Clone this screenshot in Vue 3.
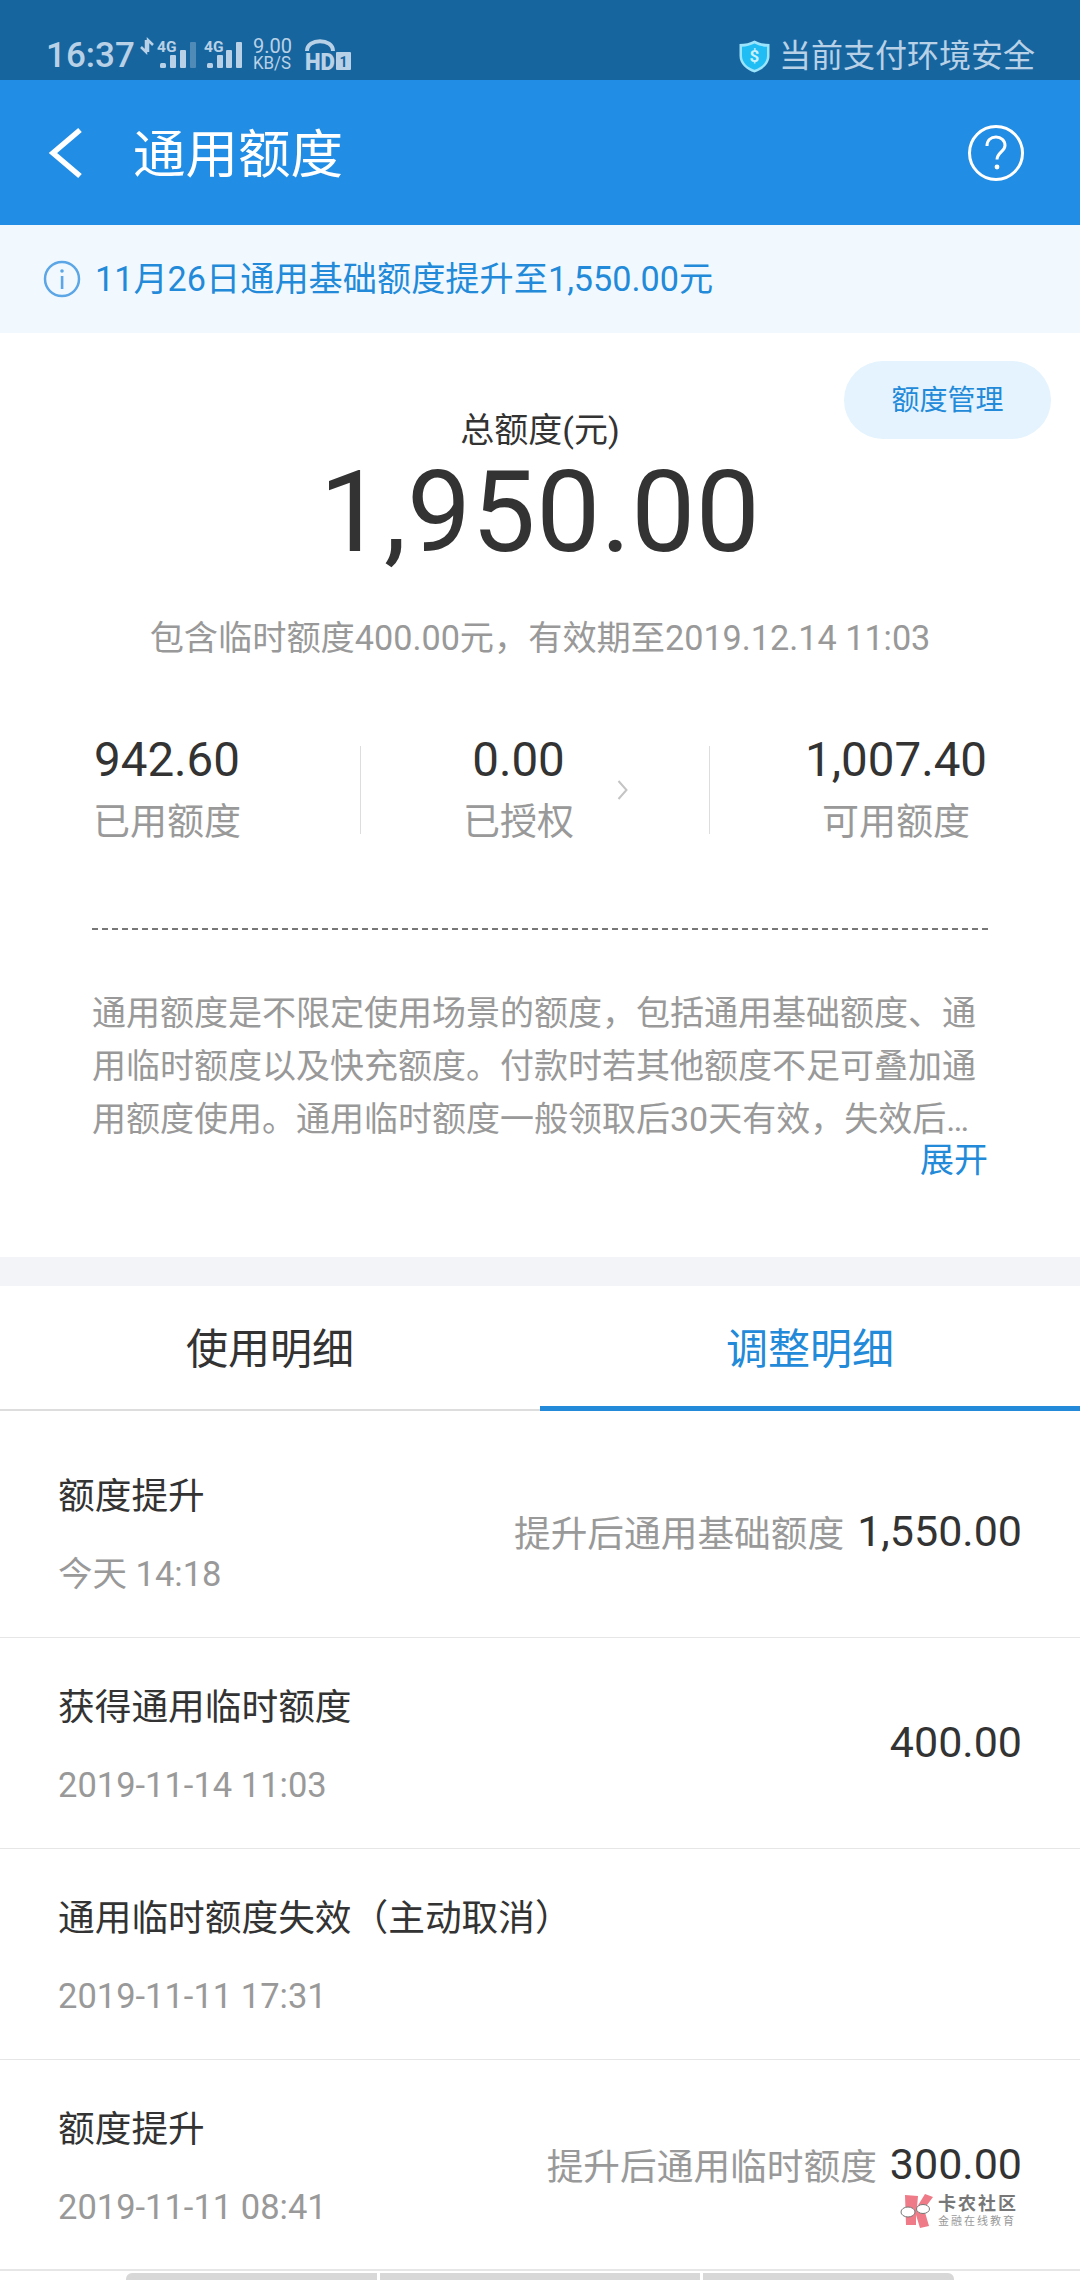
<script setup>
import { ref } from 'vue';

const activeTab = ref(1);
const tabs = ['使用明细', '调整明细'];

const stats = [
  { value: '942.60', label: '已用额度', cls: 'used' },
  { value: '0.00', label: '已授权', cls: 'auth' },
  { value: '1,007.40', label: '可用额度', cls: 'free' }
];

const records = [
  { title: '额度提升', time: '今天 14:18', note: '提升后通用基础额度', amount: '1,550.00' },
  { title: '获得通用临时额度', time: '2019-11-14 11:03', note: '', amount: '400.00' },
  { title: '通用临时额度失效（主动取消）', time: '2019-11-11 17:31', note: '', amount: '' },
  { title: '额度提升', time: '2019-11-11 08:41', note: '提升后通用临时额度', amount: '300.00' }
];
</script>

<template>
  <div class="page" lang="zh-CN">
    <div class="status">
      <span class="clock">16:37</span>
      <svg class="sys" width="220" height="44" viewBox="0 -8 220 44" fill="#b9d1e6">
        <path d="M10 2v12L5 9 M12 14V2l5 5" stroke="#b9d1e6" stroke-width="2.500" fill="none" />
        <text x="21" y="14" font-size="15.500" font-weight="700" font-family="Roboto">4G</text>
        <rect x="24" y="25" width="6" height="5" rx="1.500" />
        <rect x="34" y="17" width="6" height="13" rx="1" />
        <rect x="44" y="12" width="6" height="18" rx="1" />
        <rect x="54" y="4" width="6" height="26" rx="1" opacity="0.35" />
        <text x="68" y="14" font-size="15.500" font-weight="700" font-family="Roboto">4G</text>
        <rect x="71" y="25" width="6" height="5" rx="1.500" />
        <rect x="81" y="17" width="6" height="13" rx="1" />
        <rect x="90" y="12" width="6" height="18" rx="1" />
        <rect x="100" y="4" width="6" height="26" rx="1" />
        <text x="117" y="15" font-size="20" font-family="Roboto">9.00</text>
        <text x="117" y="31" font-size="18" font-family="Roboto" textLength="38" lengthAdjust="spacingAndGlyphs">KB/S</text>
        <path d="M171 13c0-13 26-13 26 0" stroke="#b9d1e6" stroke-width="4" fill="none" />
        <text x="169" y="32" font-size="24" font-weight="900" font-family="Roboto" textLength="30" lengthAdjust="spacingAndGlyphs">HD</text>
        <rect x="200" y="14" width="15" height="18" rx="1" />
        <text x="203.500" y="29" font-size="14" font-weight="700" font-family="Roboto" fill="#17659f">1</text>
      </svg>
      <span class="safe">
        <svg width="31" height="33" viewBox="0 0 31 33">
          <path d="M15.500 0.500C20 3 25 4 30.500 4v12c0 8-7 14-15 16.500C7.500 30 0.500 24 0.500 16V4C6 4 11 3 15.500 0.500z" fill="#9be4fb" />
          <path d="M15.500 3.500C19.500 5.500 23.500 6.500 28 6.800V16c0 6.500-5.500 11.500-12.500 13.800C8.500 27.500 3 22.500 3 16V6.800C7.500 6.500 11.500 5.500 15.500 3.500z" fill="#1fbdf3" />
          <text x="15.500" y="22" text-anchor="middle" font-size="17" font-weight="700" font-family="Roboto" fill="#c9f1fd">$</text>
        </svg>
        当前支付环境安全
      </span>
    </div>

    <header class="bar">
      <svg class="back" width="36" height="52" viewBox="0 0 36 52">
        <path d="M32 3L5 26l27 23" fill="none" stroke="#fff" stroke-width="5.500" />
      </svg>
      <h1 class="title">通用额度</h1>
      <svg class="help" width="58" height="58" viewBox="0 0 58 58">
        <circle cx="29" cy="29" r="26.500" fill="none" stroke="#fff" stroke-width="3" />
        <path d="M20 22c0-6 4-9 9-9s9 3.500 9 8.500c0 6-8 7-8 14" fill="none" stroke="#fff" stroke-width="3" />
        <circle cx="30" cy="43" r="2.400" fill="#fff" />
      </svg>
    </header>

    <div class="notice">
      <svg width="38" height="38" viewBox="0 0 38 38">
        <circle cx="19" cy="19" r="17" fill="none" stroke="#5ca6e6" stroke-width="2.500" />
        <rect x="17.800" y="16" width="2.600" height="13" fill="#5ca6e6" />
        <circle cx="19" cy="11" r="1.800" fill="#5ca6e6" />
      </svg>
      <span class="notice-text">11月26日通用基础额度提升至1,550.00元</span>
    </div>

    <section class="summary">
      <button class="manage">额度管理</button>
      <div class="total-label">总额度(元)</div>
      <div class="total">1,950.00</div>
      <div class="temp">包含临时额度400.00元，有效期至2019.12.14 11:03</div>

      <div class="stats">
        <div v-for="s in stats" :key="s.cls" class="stat" :class="s.cls">
          <div class="stat-value">{{ s.value }}</div>
          <div class="stat-label">{{ s.label }}</div>
          <svg v-if="s.cls === 'auth'" class="chevron" width="11" height="20" viewBox="0 0 11 20">
            <path d="M1.500 1l8 9-8 9" fill="none" stroke="#c4c4c4" stroke-width="2" />
          </svg>
        </div>
      </div>

      <div class="desc">
        <p>通用额度是不限定使用场景的额度，包括通用基础额度、通用临时额度以及快充额度。付款时若其他额度不足可叠加通用额度使用。通用临时额度一般领取后30天有效，失效后…</p>
        <div class="more">展开</div>
      </div>
    </section>

    <nav class="tabs">
      <div v-for="(t, i) in tabs" :key="t" class="tab" :class="{ on: activeTab === i }" @click="activeTab = i">{{ t }}</div>
    </nav>

    <ul class="list">
      <li v-for="r in records" :key="r.time" class="row">
        <div class="row-left">
          <div class="row-title">{{ r.title }}</div>
          <div class="row-time">{{ r.time }}</div>
        </div>
        <div v-if="r.amount" class="row-right">
          <span v-if="r.note" class="row-note">{{ r.note }}</span>
          <span class="row-amount">{{ r.amount }}</span>
        </div>
      </li>
    </ul>

    <div class="mark">
      <svg width="34" height="35" viewBox="0 0 34 35">
        <path d="M5 2l13 1-1 11 8-13 8 3-9 12 5 17-9 2-4-13v10H6z" fill="#ee7b87" />
        <ellipse cx="8" cy="19" rx="7" ry="5" fill="#fff" stroke="#777" stroke-width="1" />
        <ellipse cx="23" cy="16" rx="6.500" ry="4.500" fill="#fff" stroke="#777" stroke-width="1" />
      </svg>
      <div>
        <div class="mark-name">卡农社区</div>
        <div class="mark-sub">金融在线教育</div>
      </div>
    </div>

    <div class="dock">
      <span></span><span></span><span></span>
    </div>
  </div>
</template>

<style scoped>
.page {
  position: relative;
  width: 1080px;
  height: 2280px;
  overflow: hidden;
  background: #fff;
  font-family: Roboto, "Noto Sans CJK SC", sans-serif;
  color: #333;
}

.status {
  height: 80px;
  box-sizing: border-box;
  padding: 35px 45px 0 46px;
  background: #17659f;
  color: #b9d1e6;
  display: flex;
  align-items: flex-start;
}
.clock {
  font-size: 35px;
  line-height: 42px;
  font-weight: 500;
  width: 90px;
}
.sys {
  margin: -5px 0 0 0;
}
.safe {
  margin-left: auto;
  display: flex;
  align-items: center;
  gap: 9px;
  font-size: 32px;
  line-height: 42px;
}

.bar {
  height: 145px;
  background: #228de4;
  display: flex;
  align-items: center;
  padding: 0 55px 0 48px;
}
.title {
  margin: 0 0 6px 49px;
  font-size: 52.5px;
  font-weight: 400;
  color: #fff;
}
.help {
  margin-left: auto;
}

.notice {
  height: 108px;
  background: #f1f9ff;
  display: flex;
  align-items: center;
  gap: 14px;
  padding-left: 43px;
  font-size: 34.2px;
  color: #228ad8;
}
.notice-text {
  margin-bottom: 6px;
}

.summary {
  position: relative;
  height: 924px;
  box-sizing: border-box;
  padding-top: 74px;
  text-align: center;
}
.manage {
  position: absolute;
  top: 28px;
  right: 29px;
  width: 207px;
  height: 78px;
  padding: 0 0 5px;
  border: 0;
  border-radius: 39px;
  background: #e4f3fd;
  color: #228ad8;
  font: 28px Roboto, "Noto Sans CJK SC", sans-serif;
}
.total-label {
  font-size: 34px;
  line-height: 46px;
}
.total {
  font-size: 114px;
  line-height: 118px;
  letter-spacing: 0.5px;
}
.temp {
  margin-top: 44px;
  font-size: 34.2px;
  line-height: 46px;
  color: #999;
}

.stats {
  display: flex;
  margin-top: 85px;
  padding-left: 93px;
}
.stat {
  position: relative;
  height: 88px;
  display: flex;
  flex-direction: column;
  align-items: center;
}
.stat-value {
  font-size: 47.5px;
  line-height: 54px;
  margin-top: -13px;
}
.stat-label {
  font-size: 37px;
  line-height: 50px;
  margin-top: 11px;
  color: #999;
}
.used {
  padding-right: 119px;
  border-right: 1px solid #ddd;
}
.auth {
  padding: 0 135px 0 102px;
  border-right: 1px solid #ddd;
}
.free {
  padding-left: 95px;
}
.chevron {
  position: absolute;
  right: 81px;
  top: 34px;
}

.desc {
  margin: 94px 92px 0;
  padding-top: 57px;
  border-top: 2px dashed #777;
  font-size: 34px;
  line-height: 53px;
  color: #999;
  text-align: left;
}
.desc p {
  margin: 0;
}
.more {
  margin-top: -8px;
  text-align: right;
  color: #228ad8;
  line-height: 44px;
}

.tabs {
  display: flex;
  height: 125px;
  border-top: 29px solid #f3f4f8;
  box-sizing: content-box;
}
.tab {
  flex: 1;
  display: flex;
  align-items: center;
  justify-content: center;
  padding-bottom: 5px;
  font-size: 42px;
  border-bottom: 2px solid #ddd;
}
.tab.on {
  color: #228ad8;
  border-bottom: 5px solid #228ad8;
  padding-bottom: 2px;
}

.list {
  list-style: none;
  margin: 0;
  padding: 16px 0 0;
}
.row {
  height: 210px;
  padding: 0 58px;
  display: flex;
  align-items: center;
  justify-content: space-between;
  border-bottom: 1px solid #e6e6e6;
}
.row-left {
  padding-top: 4px;
}
.row-title {
  font-size: 36.7px;
  line-height: 50px;
}
.row-time {
  margin-top: 29px;
  font-size: 34.5px;
  line-height: 46px;
  color: #999;
}
.row-right {
  display: flex;
  align-items: center;
  gap: 13px;
  margin-bottom: 2px;
}
.row-note {
  font-size: 36.7px;
  color: #999;
}
.row-amount {
  font-size: 43px;
}

.mark {
  position: absolute;
  left: 900px;
  top: 2193px;
  display: flex;
  gap: 4px;
}
.mark-name {
  font-size: 18px;
  line-height: 22px;
  font-weight: 700;
  letter-spacing: 2px;
  color: #777;
}
.mark-sub {
  font-size: 11px;
  line-height: 14px;
  letter-spacing: 2px;
  color: #999;
}

.dock {
  position: absolute;
  left: 0;
  right: 0;
  bottom: 0;
  height: 9px;
  border-top: 2px solid #e6e6e6;
  display: flex;
  justify-content: center;
  align-items: flex-end;
  gap: 3px;
}
.dock span {
  height: 7px;
  width: 251px;
  background: #d8d8d8;
}
.dock span:nth-child(2) {
  width: 320px;
}
.dock span:first-child {
  border-top-left-radius: 6px;
}
.dock span:last-child {
  border-top-right-radius: 6px;
}
</style>
